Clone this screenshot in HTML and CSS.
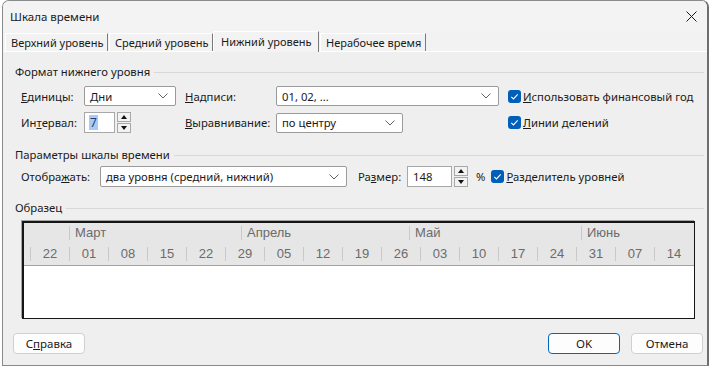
FILE: index.html
```html
<!DOCTYPE html>
<html lang="ru">
<head>
    <meta charset="UTF-8">
    <title>Шкала времени</title>
    <link rel="stylesheet" href="styles.css">
</head>
<body>
<div class="dialog">
    <div class="titlebar">
        <span class="title">Шкала времени</span>
        <svg class="close" width="11" height="11" viewBox="0 0 11 11"><path d="M0.5 0.5 L10.5 10.5 M10.5 0.5 L0.5 10.5" stroke="#1b1b1b" stroke-width="1"/></svg>
    </div>
    <div class="tabs">
        <div class="tab t1">Верхний уровень</div>
        <div class="tab t2">Средний уровень</div>
        <div class="tab t3 active">Нижний уровень</div>
        <div class="tab t4">Нерабочее время</div>
    </div>
    <div class="panel">
        <div class="group-title first"><span>Формат нижнего уровня</span></div>
        <div class="format-grid">
            <label class="lbl"><u>Е</u>диницы:</label>
            <div class="select w-units"><span>Дни</span><svg class="chev" width="10" height="6" viewBox="0 0 10 6"><path d="M0.5 0.5 L5 5 L9.5 0.5" fill="none" stroke="#606060"/></svg></div>
            <label class="lbl"><u>Н</u>адписи:</label>
            <div class="select w-labels"><span>01, 02, ...</span><svg class="chev" width="10" height="6" viewBox="0 0 10 6"><path d="M0.5 0.5 L5 5 L9.5 0.5" fill="none" stroke="#606060"/></svg></div>
            <div class="check"><svg class="box" width="13" height="13" viewBox="0 0 13 13"><rect width="13" height="13" rx="3" fill="#005fb8"/><path d="M3.3 6.8 L5.5 8.9 L9.7 4.4" fill="none" stroke="#fff" stroke-width="1.1"/></svg><span><u>И</u>спользовать финансовый год</span></div>

            <label class="lbl">Ин<u>т</u>ервал:</label>
            <div class="spin-field">
                <div class="input w-interval"><span class="selected">7</span></div>
                <div class="spin"><div class="spin-btn"><i class="up"></i></div><div class="spin-btn"><i class="down"></i></div></div>
            </div>
            <label class="lbl"><u>В</u>ыравнивание:</label>
            <div class="select w-align"><span>по центру</span><svg class="chev" width="10" height="6" viewBox="0 0 10 6"><path d="M0.5 0.5 L5 5 L9.5 0.5" fill="none" stroke="#606060"/></svg></div>
            <div class="check"><svg class="box" width="13" height="13" viewBox="0 0 13 13"><rect width="13" height="13" rx="3" fill="#005fb8"/><path d="M3.3 6.8 L5.5 8.9 L9.7 4.4" fill="none" stroke="#fff" stroke-width="1.1"/></svg><span><u>Л</u>инии делений</span></div>
        </div>

        <div class="group-title second"><span>Параметры шкалы времени</span></div>
        <div class="params-row">
            <label class="lbl l-show">Отобра<u>ж</u>ать:</label>
            <div class="select w-show"><span>два уровня (средний, нижний)</span><svg class="chev" width="10" height="6" viewBox="0 0 10 6"><path d="M0.5 0.5 L5 5 L9.5 0.5" fill="none" stroke="#606060"/></svg></div>
            <label class="lbl l-size">Ра<u>з</u>мер:</label>
            <div class="spin-field">
                <div class="input w-size"><span>148</span></div>
                <div class="spin"><div class="spin-btn"><i class="up"></i></div><div class="spin-btn"><i class="down"></i></div></div>
            </div>
            <span class="pct">%</span>
            <div class="check"><svg class="box" width="13" height="13" viewBox="0 0 13 13"><rect width="13" height="13" rx="3" fill="#005fb8"/><path d="M3.3 6.8 L5.5 8.9 L9.7 4.4" fill="none" stroke="#fff" stroke-width="1.1"/></svg><span><u>Р</u>азделитель уровней</span></div>
        </div>

        <div class="group-title third"><span>Образец</span></div>
        <div class="preview">
            <div class="tier months">
                <div class="cell"></div>
                <div class="cell">Март</div>
                <div class="cell">Апрель</div>
                <div class="cell">Май</div>
                <div class="cell">Июнь</div>
            </div>
            <div class="tier days">
                <div class="cell first"></div>
                <div class="cell">22</div>
                <div class="cell">01</div>
                <div class="cell">08</div>
                <div class="cell">15</div>
                <div class="cell">22</div>
                <div class="cell">29</div>
                <div class="cell">05</div>
                <div class="cell">12</div>
                <div class="cell">19</div>
                <div class="cell">26</div>
                <div class="cell">03</div>
                <div class="cell">10</div>
                <div class="cell">17</div>
                <div class="cell">24</div>
                <div class="cell">31</div>
                <div class="cell">07</div>
                <div class="cell">14</div>
            </div>
            <div class="chart"></div>
        </div>
    </div>
    <div class="buttons">
        <button class="btn">С<u>п</u>равка</button>
        <span class="spacer"></span>
        <button class="btn default">OK</button>
        <button class="btn">Отмена</button>
    </div>
</div>
</body>
</html>
```

FILE: styles.css
```css
body {
    margin: 0;
    background-color: #ffffff;
    font-family: "Noto Sans", sans-serif;
    font-size: 11.3px;
    color: #1a1a1a;
}

.dialog {
    margin-left: 2px;
    width: 704px;
    height: 364px;
    border: 1px solid #8a8a8a;
    border-right: 2px solid #6e6e6e;
    border-radius: 7px 7px 0 0;
    background-color: #efefef;
    display: flex;
    flex-direction: column;
    overflow: hidden;
}

.titlebar {
    height: 30px;
    background-color: #f3f3f3;
    display: flex;
    align-items: center;
    padding: 0 8px 0 7px;
    font-size: 11.5px;
}
.title {
    flex: 1;
    margin-top: 1px;
}
.close {
    margin-right: 2px;
}

/* tabs */
.tabs {
    height: 20px;
    background-color: #f2f2f2;
    display: flex;
    align-items: flex-end;
    padding-left: 2px;
    font-size: 11px;
}
.tab {
    height: 17px;
    line-height: 17px;
    padding-left: 5px;
    border-left: 1px solid #ffffff;
    border-top: 1px solid #ffffff;
    border-right: 1px solid #7a7a7a;
    margin-right: 1px;
    white-space: nowrap;
    box-sizing: content-box;
}
.t1 { width: 96px; }
.t2 { width: 97px; }
.t3 { width: 97px; }
.t4 { width: 99px; }
.tab.active {
    height: 20px;
    line-height: 20px;
    background-color: #f3f3f3;
    margin: 0 1px 0 -1px;
    padding-left: 7px;
    position: relative;
    top: 1px;
}

.panel {
    border-top: 1px solid #ffffff;
    padding: 12px 0 0 12px;
}

.group-title {
    display: flex;
    align-items: center;
    height: 16px;
    line-height: 16px;
    padding-right: 3px;
}
.group-title::after {
    content: "";
    flex: 1;
    height: 1px;
    background-color: #d8d8d8;
    margin-left: 4px;
}
.second { margin-top: 14px; }
.third { margin-top: 13px; }

.lbl {
    white-space: nowrap;
}

/* first group */
.format-grid {
    margin: 6px 0 0 6px;
    display: grid;
    grid-template-columns: 63px 101px 91px 232px auto;
    grid-template-rows: 20px 21px;
    row-gap: 6px;
    align-items: center;
}

.select {
    height: 18px;
    background-color: #ffffff;
    border: 1px solid #9a9a9a;
    border-radius: 2px;
    display: flex;
    align-items: center;
    padding: 0 7px 0 5px;
    box-sizing: content-box;
}
.select span {
    flex: 1;
    white-space: nowrap;
}
.w-units { width: 78px; }
.w-labels { width: 209px; }
.w-align { width: 113px; }
.w-show { width: 233px; }

.spin-field {
    display: flex;
    gap: 2px;
    height: 21px;
}
.input {
    background-color: #ffffff;
    border: 1px solid #a8a8a8;
    height: 19px;
    display: flex;
    align-items: center;
    padding-left: 4px;
}
.w-interval { width: 25px; }
.w-size { width: 38px; padding-left: 5px; }
.selected {
    background-color: #a9cdf2;
    color: #1f3d7a;
    padding: 0 1px;
    line-height: 15px;
    font-size: 12px;
}

.spin {
    display: flex;
    flex-direction: column;
    gap: 1px;
}
.spin-btn {
    width: 12px;
    height: 8px;
    border: 1px solid #a8a8a8;
    background-color: #f2f2f2;
    display: flex;
    align-items: center;
    justify-content: center;
}
.up {
    border-left: 3.5px solid transparent;
    border-right: 3.5px solid transparent;
    border-bottom: 4px solid #111111;
}
.down {
    border-left: 3.5px solid transparent;
    border-right: 3.5px solid transparent;
    border-top: 4px solid #111111;
}

.check {
    display: flex;
    align-items: center;
    gap: 2px;
    white-space: nowrap;
}

/* second group */
.params-row {
    margin: 3px 0 0 6px;
    display: flex;
    align-items: center;
    height: 21px;
}
.l-show { width: 79px; }
.w-show { height: 19px; }
.l-size { margin-left: 11px; width: 49px; }
.pct { margin: 0 6px 0 8px; }

/* preview */
.preview {
    margin: 5px 0 0 7px;
    width: 670px;
    height: 95px;
    border: 1px solid #151515;
    border-left: 2px solid #151515;
    border-top: 2px solid #151515;
    box-shadow: -1px -1px 0 #a6a6a6;
    background-color: #ffffff;
    font-family: "Liberation Sans", Arial, sans-serif;
    font-size: 13px;
    color: #6b6b6b;
}
.tier {
    display: grid;
    background-color: #e6e6e6;
}
.months {
    grid-template-columns: 45px 172px 168px 172px 1fr;
    height: 20px;
}
.months .cell {
    margin-top: 3px;
    height: 14px;
    line-height: 14px;
    padding-left: 5px;
    border-left: 1px solid #c9c9c9;
}
.months .cell:first-child {
    border-left: none;
}
.days {
    grid-template-columns: 6px repeat(17, 39px);
    height: 22px;
    border-bottom: 1px solid #a3a3a3;
}
.days .cell {
    margin-top: 4px;
    height: 14px;
    line-height: 13px;
    text-align: center;
    border-left: 1px solid #c9c9c9;
}
.days .cell.first {
    border-left: none;
}

/* buttons */
.buttons {
    margin-top: 14px;
    display: flex;
    padding: 0 4px 0 10px;
    gap: 11px;
}
.spacer { flex: 1; }
.btn {
    width: 72px;
    height: 21px;
    font-family: "Noto Sans", sans-serif;
    font-size: 11.5px;
    color: #1a1a1a;
    background-color: #fdfdfd;
    border: 1px solid #d0d0d0;
    border-radius: 4px;
    padding: 0;
}
.btn.default {
    border-color: #0067c0;
}
```
